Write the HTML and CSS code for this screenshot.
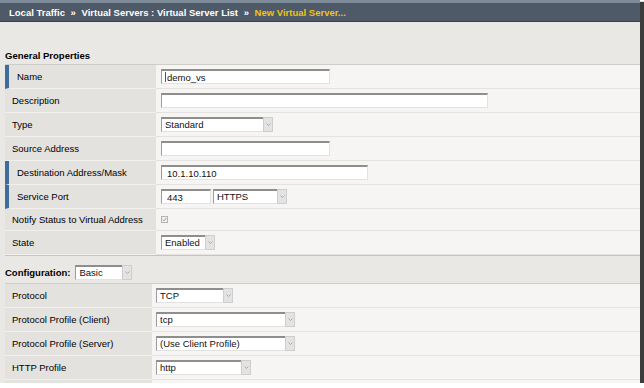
FILE: index.html
```html
<!DOCTYPE html>
<html lang="en">
<head>
    <meta charset="UTF-8">
    <title>New Virtual Server</title>
    <link rel="stylesheet" href="styles.css">
</head>
<body>
    <div class="page">
        <div class="topbar">
            <span>Local Traffic</span>
            <span class="sep">&raquo;</span>
            <span>Virtual Servers : Virtual Server List</span>
            <span class="sep">&raquo;</span>
            <span class="current">New Virtual Server...</span>
        </div>

        <div class="section-title">General Properties</div>
        <div class="form">
            <div class="row">
                <div class="label required">Name</div>
                <div class="value"><input class="text-input w169" type="text" value="demo_vs"><span class="caret"></span></div>
            </div>
            <div class="row">
                <div class="label">Description</div>
                <div class="value"><input class="text-input w327" type="text"></div>
            </div>
            <div class="row">
                <div class="label">Type</div>
                <div class="value">
                    <span class="select w112"><span class="select-value">Standard</span><span class="select-arrow"><svg width="5" height="3" viewBox="0 0 5 3"><path d="M0.5 0.5 L2.5 2.5 L4.5 0.5" fill="none" stroke="#aaa"/></svg></span></span>
                </div>
            </div>
            <div class="row">
                <div class="label">Source Address</div>
                <div class="value"><input class="text-input w169" type="text"></div>
            </div>
            <div class="row">
                <div class="label required">Destination Address/Mask</div>
                <div class="value"><input class="text-input w207" type="text" value="10.1.10.110"></div>
            </div>
            <div class="row">
                <div class="label required">Service Port</div>
                <div class="value">
                    <input class="text-input w50" type="text" value="443">
                    <span class="select w74"><span class="select-value">HTTPS</span><span class="select-arrow"><svg width="5" height="3" viewBox="0 0 5 3"><path d="M0.5 0.5 L2.5 2.5 L4.5 0.5" fill="none" stroke="#aaa"/></svg></span></span>
                </div>
            </div>
            <div class="row row-short">
                <div class="label">Notify Status to Virtual Address</div>
                <div class="value">
                    <svg class="checkbox" width="7" height="7" viewBox="0 0 7 7"><rect x="0.5" y="0.5" width="6" height="6" fill="#f2f2f2" stroke="#b4b4b4"/><path d="M1.8 3.6 L3 4.8 L5.3 2" fill="none" stroke="#8c8c8c" stroke-width="0.9"/></svg>
                </div>
            </div>
            <div class="row">
                <div class="label">State</div>
                <div class="value">
                    <span class="select w54"><span class="select-value">Enabled</span><span class="select-arrow"><svg width="5" height="3" viewBox="0 0 5 3"><path d="M0.5 0.5 L2.5 2.5 L4.5 0.5" fill="none" stroke="#aaa"/></svg></span></span>
                </div>
            </div>
        </div>

        <div class="config-bar">
            <span class="config-title">Configuration:</span>
            <span class="select w57"><span class="select-value">Basic</span><span class="select-arrow"><svg width="5" height="3" viewBox="0 0 5 3"><path d="M0.5 0.5 L2.5 2.5 L4.5 0.5" fill="none" stroke="#aaa"/></svg></span></span>
        </div>
        <div class="form form-narrow">
            <div class="row">
                <div class="label">Protocol</div>
                <div class="value">
                    <span class="select w77"><span class="select-value">TCP</span><span class="select-arrow"><svg width="5" height="3" viewBox="0 0 5 3"><path d="M0.5 0.5 L2.5 2.5 L4.5 0.5" fill="none" stroke="#aaa"/></svg></span></span>
                </div>
            </div>
            <div class="row">
                <div class="label">Protocol Profile (Client)</div>
                <div class="value">
                    <span class="select w139"><span class="select-value">tcp</span><span class="select-arrow"><svg width="5" height="3" viewBox="0 0 5 3"><path d="M0.5 0.5 L2.5 2.5 L4.5 0.5" fill="none" stroke="#aaa"/></svg></span></span>
                </div>
            </div>
            <div class="row">
                <div class="label">Protocol Profile (Server)</div>
                <div class="value">
                    <span class="select w139"><span class="select-value">(Use Client Profile)</span><span class="select-arrow"><svg width="5" height="3" viewBox="0 0 5 3"><path d="M0.5 0.5 L2.5 2.5 L4.5 0.5" fill="none" stroke="#aaa"/></svg></span></span>
                </div>
            </div>
            <div class="row">
                <div class="label">HTTP Profile</div>
                <div class="value">
                    <span class="select w95"><span class="select-value">http</span><span class="select-arrow"><svg width="5" height="3" viewBox="0 0 5 3"><path d="M0.5 0.5 L2.5 2.5 L4.5 0.5" fill="none" stroke="#aaa"/></svg></span></span>
                </div>
            </div>
            <div class="row">
                <div class="label">&nbsp;</div>
                <div class="value"></div>
            </div>
        </div>
    </div>
</body>
</html>
```

FILE: styles.css
```css
* {
    margin: 0;
    padding: 0;
    box-sizing: border-box;
}

body {
    background: white;
    font-family: "Liberation Sans", Arial, sans-serif;
    font-size: 9.5px;
    color: #000;
}

.page {
    width: 640px;
    height: 383px;
    overflow: hidden;
    background: #eae8e4;
    box-shadow: 3px 3px 1px 1px #3c3c3c;
}

.topbar {
    height: 22px;
    border-top: 3px solid #7e8c9a;
    border-bottom: 1px solid #38414b;
    background: #4e5a67;
    color: white;
    font-weight: bold;
    line-height: 18px;
    padding: 1px 0 0 9px;
    white-space: nowrap;
}

.topbar .sep {
    margin: 0 3px;
}

.topbar .current {
    color: #f2c414;
}

.section-title {
    font-weight: bold;
    line-height: 12px;
    padding: 28px 5px 2px;
}

.form {
    margin-left: 5px;
    border-top: 1px solid #cfcdc9;
    border-bottom: 1px solid #c6c4c0;
}

.row {
    display: flex;
    height: 24px;
}

.row-short {
    height: 22px;
}

.label {
    width: 151px;
    flex: none;
    display: flex;
    align-items: center;
    padding-left: 7px;
    background: #e4e2de;
    border-bottom: 1px solid #f0efec;
    white-space: nowrap;
}

.label.required {
    border-left: 4px solid #3e6d9d;
    padding-left: 8px;
}

.form-narrow .label {
    width: 147px;
}

.value {
    flex: 1;
    display: flex;
    align-items: center;
    gap: 2px;
    padding-left: 5px;
    background: #f6f5f3;
    border-bottom: 1px solid #e5e3df;
    position: relative;
}

.form-narrow .value {
    padding-left: 4px;
}

.text-input {
    display: block;
    height: 15px;
    border: 1px solid #e2e2e2;
    border-top: 2px solid #8e8e8e;
    border-left-color: #9c9c9c;
    background: white;
    padding: 0 4px 0 5px;
    font-family: inherit;
    font-size: 9.5px;
    line-height: 12px;
    color: #111;
    outline: none;
}

.caret {
    position: absolute;
    left: 9px;
    top: 7px;
    width: 1px;
    height: 10px;
    background: #555;
}

.select {
    display: flex;
    height: 15px;
    background: white;
    color: #111;
}

.select-value {
    flex: 1;
    border-top: 2px solid #8e8e8e;
    border-left: 1px solid #9c9c9c;
    border-bottom: 1px solid #e2e2e2;
    padding-left: 3px;
    line-height: 12px;
    white-space: nowrap;
    overflow: hidden;
}

.select-arrow {
    width: 10px;
    flex: none;
    display: flex;
    align-items: center;
    justify-content: center;
    background: #e3e3e3;
    border: 1px solid #cecece;
}

.checkbox {
    display: block;
}

.config-bar {
    height: 27px;
    display: flex;
    align-items: center;
    gap: 5px;
    padding: 6px 5px 0;
}

.config-title {
    font-weight: bold;
}

.w50 { width: 50px; }
.w54 { width: 54px; }
.w57 { width: 57px; }
.w74 { width: 74px; }
.w77 { width: 77px; }
.w95 { width: 95px; }
.w112 { width: 112px; }
.w139 { width: 139px; }
.w169 { width: 169px; }
.w207 { width: 207px; }
.w327 { width: 327px; }
```
